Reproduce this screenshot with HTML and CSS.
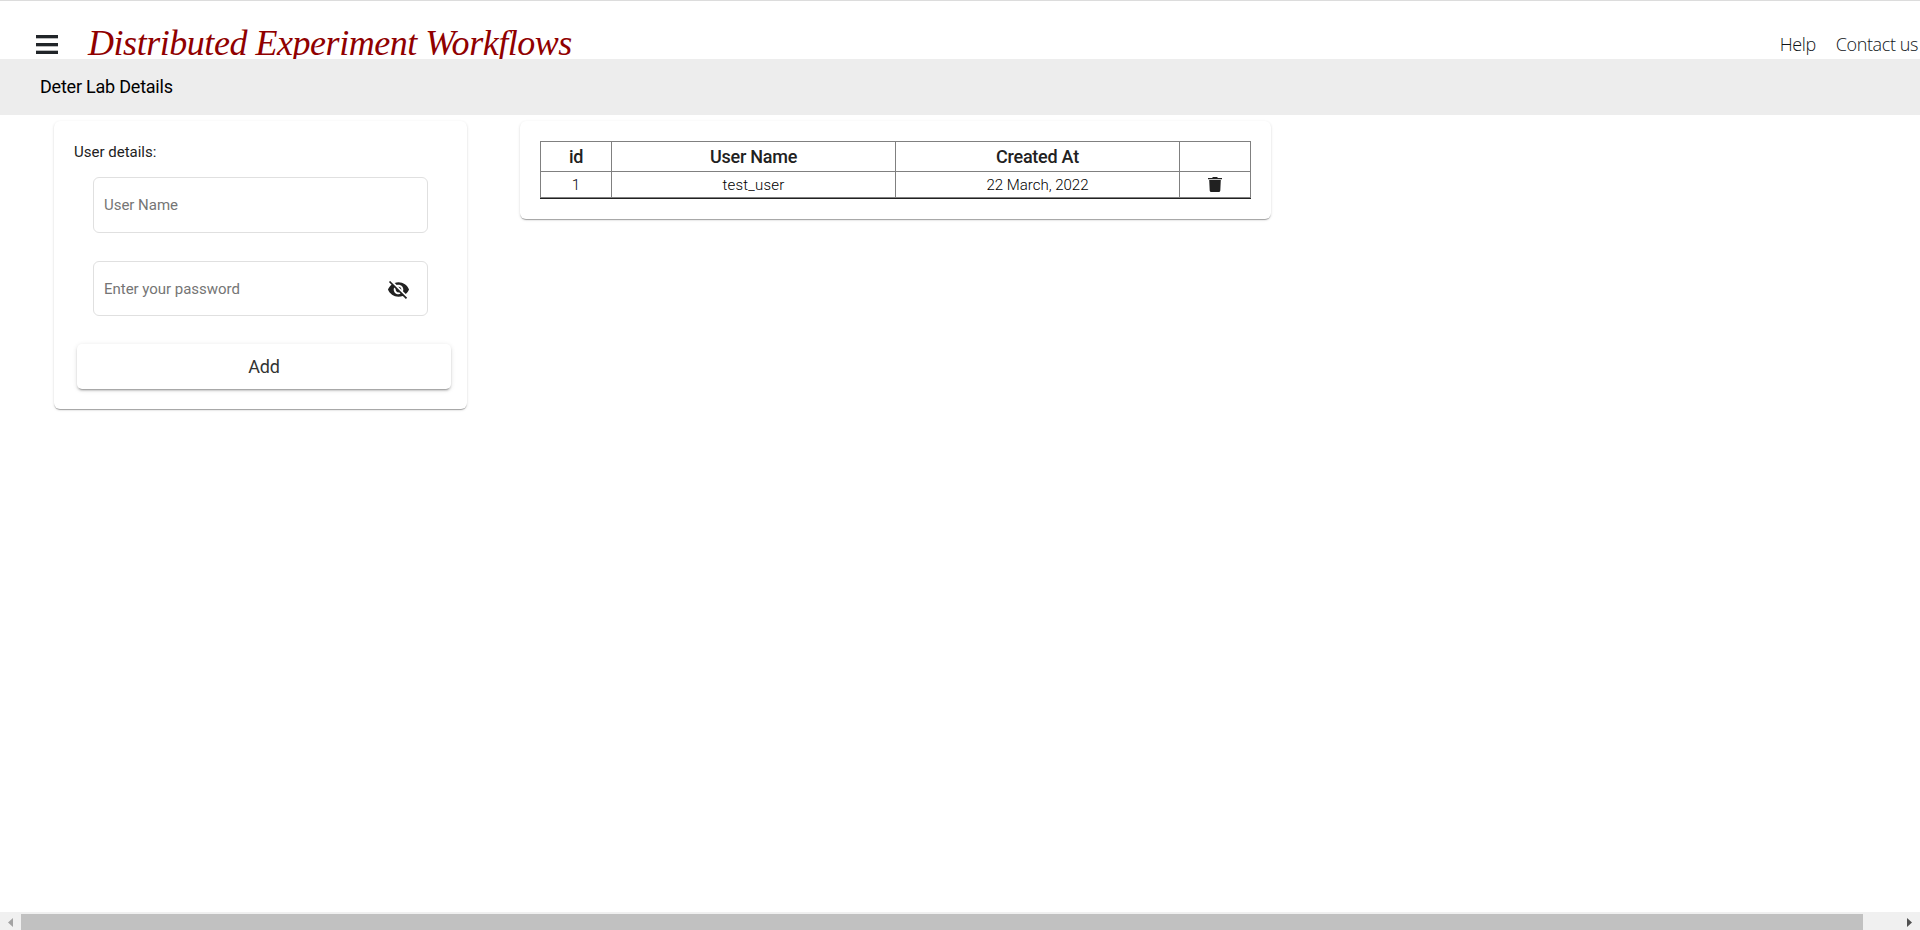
FILE: index.html
```html
<!DOCTYPE html>
<html lang="en">
<head>
<meta charset="utf-8">
<title>Distributed Experiment Workflows</title>
<link rel="stylesheet" href="styles.css">
</head>
<body>
<header class="header">
  <svg class="menu" width="22" height="20" viewBox="0 0 22 20" shape-rendering="crispEdges"><path fill="#212529" d="M0 0h22v3H0zM0 8h22v3H0zM0 16h22v3H0z"/><path fill="#b9babb" d="M0 3h22v1H0zM0 11h22v1H0zM0 15h22v1H0z"/></svg>
  <h1 class="title">Distributed Experiment Workflows</h1>
  <nav class="links"><a class="link">Help</a><a class="link">Contact us</a></nav>
</header>
<div class="subheader"><span class="page-name">Deter Lab Details</span></div>
<main class="content">
  <section class="card form-card">
    <div class="form-label">User details:</div>
    <div class="field"><span class="hint">User Name</span></div>
    <div class="field field-password"><span class="hint">Enter your password</span>
      <svg class="eye" width="23" height="23" viewBox="0 0 24 24"><path fill="#212121" d="M12 7c2.76 0 5 2.24 5 5 0 .65-.13 1.26-.36 1.83l2.92 2.92c1.51-1.26 2.7-2.89 3.43-4.75-1.73-4.39-6-7.5-11-7.5-1.4 0-2.74.25-3.98.7l2.16 2.16C10.74 7.13 11.35 7 12 7zM2 4.27l2.28 2.28.46.46C3.08 8.3 1.78 10.02 1 12c1.73 4.39 6 7.5 11 7.5 1.55 0 3.03-.3 4.38-.84l.42.42L19.73 22 21 20.73 3.27 3 2 4.27zM7.53 9.8l1.55 1.55c-.05.21-.08.43-.08.65 0 1.66 1.34 3 3 3 .22 0 .44-.03.65-.08l1.55 1.55c-.67.33-1.41.53-2.2.53-2.76 0-5-2.24-5-5 0-.79.2-1.53.53-2.2zm4.31-.78l3.15 3.15.02-.16c0-1.66-1.34-3-3-3l-.17.01z"/></svg>
    </div>
    <div class="add"><span>Add</span></div>
  </section>
  <section class="card table-card">
    <div class="table">
      <div class="row head"><div class="cell">id</div><div class="cell"><span>User Name</span></div><div class="cell"><span>Created At</span></div><div class="cell"></div></div>
      <div class="row"><div class="cell">1</div><div class="cell"><span class="td-user">test_user</span></div><div class="cell"><span>22 March, 2022</span></div><div class="cell">
        <svg width="14" height="15" viewBox="0 0 14 15"><path fill="#212121" d="M0 1h4l1-1h4l1 1h4v1.200H0zM1.200 3h11.600l-.5 10.500a1.600 1.600 0 0 1-1.600 1.500H3.300a1.600 1.600 0 0 1-1.600-1.500z"/></svg></div></div>
    </div>
  </section>
</main>
<footer class="scrollbar">
  <svg class="arrow" width="21" height="18" viewBox="0 0 21 18"><path fill="#a3a3a3" d="M13 6v9L8 10.500z"/></svg>
  <div class="thumb"></div>
  <svg class="arrow" width="21" height="18" viewBox="0 0 21 18"><path fill="#505050" d="M8 6v9l5-4.500z"/></svg>
</footer>
</body>
</html>
```
FILE: styles.css
```css
* { box-sizing: border-box; }
body { margin: 0; height: 930px; overflow: hidden; display: flex; flex-direction: column; background: #fff; color: #212121; font-family: Roboto, sans-serif; font-size: 15px; }
span { white-space: nowrap; }
.header { height: 59px; flex: none; border-top: 1px solid #dcdcdc; display: flex; align-items: flex-start; overflow: hidden; }
.menu { margin: 34px 0 0 36px; flex: none; }
.title { margin: 22px 0 0 30px; font: italic 400 36px/41px "Liberation Serif", serif; letter-spacing: -0.46px; color: #900000; white-space: nowrap; }
.links { margin: 31px 2px 0 auto; display: flex; gap: 20px; font: 300 18px/25px "Open Sans", sans-serif; letter-spacing: -0.4px; color: #101418; }
.subheader { height: 56px; flex: none; background: #ededed; padding-left: 40px; font-size: 18px; line-height: 56px; letter-spacing: -0.22px; color: #000; }
.content { flex: 1; display: flex; align-items: flex-start; padding: 6px 0 0 54px; gap: 53px; }
.card { background: #fff; border-radius: 6px; box-shadow: 0 2px 1px -1px rgba(0,0,0,.2), 0 1px 1px rgba(0,0,0,.14), 0 1px 3px rgba(0,0,0,.12); }
.form-card { width: 413px; height: 288px; padding: 20px 16px 0 20px; }
.form-label { height: 36px; line-height: 22px; }
.field { width: 335px; height: 56px; margin: 0 0 28px 19px; border: 1px solid #e0e0e0; border-radius: 6px; padding: 0 17px 0 10px; display: flex; align-items: center; justify-content: space-between; color: #757575; }
.field-password { height: 55px; }
.hint { letter-spacing: -0.03px; }
.eye { margin-top: 2px; }
.add { width: 374px; height: 45px; margin-left: 3px; border-radius: 5px; display: flex; align-items: center; justify-content: center; font-size: 18px; box-shadow: 0 3px 1px -2px rgba(0,0,0,.2), 0 2px 2px rgba(0,0,0,.14), 0 1px 5px rgba(0,0,0,.12); letter-spacing: -0.2px; color: #333; }
.table-card { width: 751px; height: 98px; padding: 20px; }
.table { border: solid #808080; border-width: 1px 0 1px 1px; box-shadow: 0 1px #212121; }
.row { display: grid; grid-template-columns: 71px 284px 284px 71px; height: 25px; }
.head { height: 30px; border-bottom: 1px solid #808080; font-size: 18px; font-weight: 500; letter-spacing: -0.25px; }
.cell { border-right: 1px solid #808080; display: flex; align-items: center; justify-content: center; }
.row:not(.head) .cell { font-weight: 300; color: #000; }
.td-user { letter-spacing: 0.2px; }
.scrollbar { height: 18px; flex: none; background: #f0f0f0; display: flex; }
.thumb { width: 1842px; margin-top: 2px; background: #c1c1c1; }
.arrow { flex: none; }
.arrow:last-child { margin-left: auto; }
```
